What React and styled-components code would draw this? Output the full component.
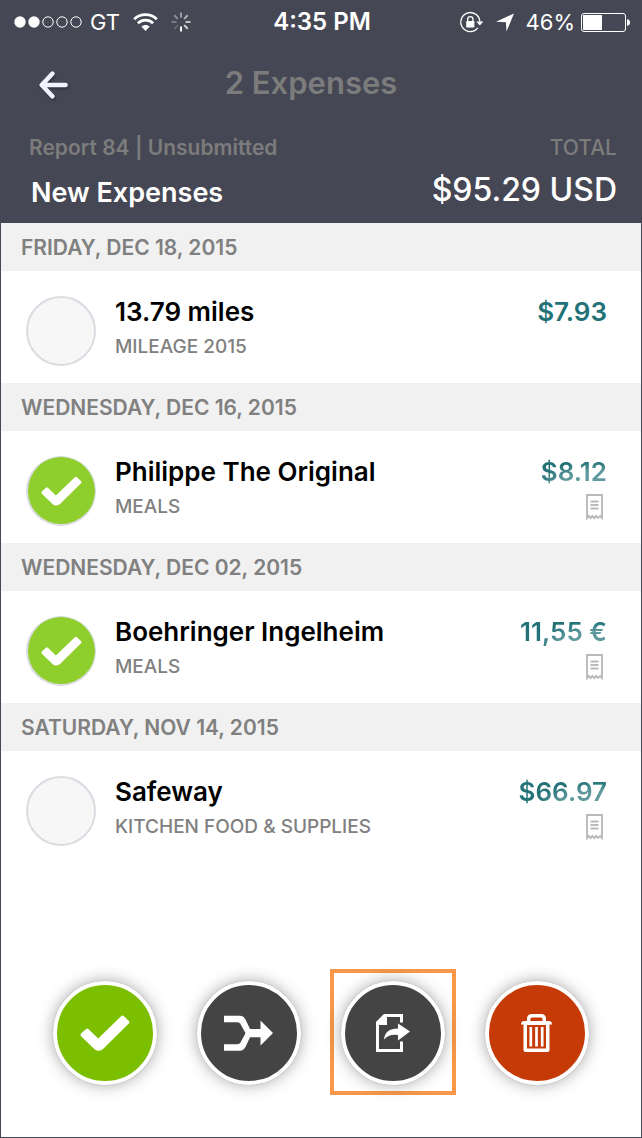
import React, { useState } from 'react';
import styled, { createGlobalStyle, css } from 'styled-components';

const GlobalStyle = createGlobalStyle`
  *, *::before, *::after { box-sizing: border-box; }
  body {
    margin: 0;
    background: #ffffff;
    font-family: Inter, "Liberation Sans", sans-serif;
  }
  h1, h2, p { margin: 0; }
`;

const Screen = styled.div`
  display: flex;
  flex-direction: column;
  min-height: 100vh;
  border: 1px solid #464754;
  border-top: 0;
`;

const Header = styled.header`
  background: #464754;
  color: #ffffff;
`;

const StatusBar = styled.div`
  display: grid;
  grid-template-columns: 1fr auto 1fr;
  align-items: center;
  height: 44px;
  padding: 0 11px 0 13px;
  font-size: 22px;
  line-height: 28px;
`;

const StatusGroup = styled.div`
  display: flex;
  align-items: center;
  justify-content: ${(p) => (p.$end ? 'flex-end' : 'flex-start')};
  gap: ${(p) => p.$gap}px;
`;

const Clock = styled.time`
  font-size: 24px;
  font-weight: 600;
`;

const Icon = styled.svg`
  display: block;
  flex: none;
  overflow: visible;
`;

const NavBar = styled.div`
  display: grid;
  grid-template-columns: 60px 1fr 80px;
  align-items: center;
  height: 78px;
  padding: 0 22px;
`;

const BackButton = styled.button`
  display: flex;
  justify-content: center;
  padding: 16px 0 12px;
  border: 0;
  background: none;
  cursor: pointer;
  svg { filter: drop-shadow(1px 2px 1px rgba(0, 0, 0, 0.3)); }
`;

const Title = styled.h1`
  color: #7c7c7c;
  font-size: 31px;
  line-height: 40px;
  font-weight: 600;
  text-align: center;
`;

const Summary = styled.div`
  display: flex;
  justify-content: space-between;
  padding: 13px 24px 10px 28px;
`;

const SummaryColumn = styled.div`
  display: flex;
  flex-direction: column;
  gap: 12px;
  align-items: ${(p) => (p.$end ? 'flex-end' : 'flex-start')};
`;

const Caption = styled.p`
  color: #7c7c7c;
  font-size: 21px;
  line-height: 26px;
  font-weight: ${(p) => (p.$light ? 500 : 600)};
`;

const ReportName = styled.p`
  padding-left: 2px;
  font-size: 27px;
  line-height: 40px;
  font-weight: 600;
`;

const ReportTotal = styled.p`
  font-size: 32px;
  line-height: 34px;
  font-weight: 500;
`;

const DateHeading = styled.h2`
  padding: 2px 20px 0;
  background: #f1f1f1;
  color: #808080;
  font-size: 21px;
  line-height: 46px;
  font-weight: 600;
  text-transform: uppercase;
`;

const Expense = styled.label`
  display: flex;
  min-height: 112px;
  padding: 25px 34px 16px 25px;
  cursor: pointer;
`;

const CheckWrap = styled.span`
  display: grid;
  flex: none;
  width: 70px;
  height: 70px;
  margin-right: 19px;
  > * { grid-area: 1 / 1; place-self: center; }
  svg { pointer-events: none; }
`;

const CheckCircle = styled.input`
  appearance: none;
  width: 70px;
  height: 70px;
  margin: 0;
  border: 2px solid #dadce2;
  border-radius: 50%;
  background: #f7f7f7;
  cursor: pointer;
  &:checked {
    background: #8fcf2d;
    border-width: 1px 1px 2px 2px;
  }
`;

const Details = styled.span`
  display: flex;
  flex: ${(p) => (p.$end ? 'none' : '1')};
  flex-direction: column;
  align-items: ${(p) => (p.$end ? 'flex-end' : 'flex-start')};
  gap: ${(p) => (p.$end ? 6 : 7)}px;
`;

const Merchant = styled.span`
  color: #000000;
  font-size: 26px;
  line-height: 32px;
  font-weight: 600;
`;

const Category = styled.span`
  color: #808080;
  font-size: 19px;
  line-height: 24px;
  font-weight: 500;
  text-transform: uppercase;
`;

const Amount = styled.span`
  color: #227277;
  font-size: 26px;
  line-height: 32px;
  font-weight: 600;
  ${(p) => p.$faded && css`
    background: radial-gradient(ellipse 64px 26px at calc(100% - 10px) 31px, #5f999d 60%, #227277 100%);
    background-clip: text;
    color: transparent;
  `}
`;

const ReceiptSlot = styled.span`
  padding: 0 4px;
`;

const Actions = styled.div`
  display: flex;
  justify-content: space-between;
  margin-top: auto;
  padding: 0 41px 42px;
`;

const ActionFrame = styled.div`
  padding: 8px 7px 6px;
  border: 4px solid ${(p) => (p.$highlighted ? '#f89848' : 'transparent')};
`;

const ActionButton = styled.button`
  display: flex;
  align-items: center;
  justify-content: center;
  width: 104px;
  height: 104px;
  padding: 0;
  border: 4px solid #ffffff;
  border-radius: 50%;
  background: ${(p) => p.$color};
  box-shadow: 0 0 1px rgba(0, 0, 0, 0.3), 0 0 16px rgba(0, 0, 0, 0.35);
  cursor: pointer;
`;

const Signal = () => (
  <Icon width="68" height="12" viewBox="0 0 68 12" aria-label="Signal strength">
    {[6, 20, 34, 48, 62].map((x, i) => (
      <circle key={x} cx={x} cy="6" r={i < 2 ? 5.7 : 5.2} fill={i < 2 ? '#fff' : 'none'} stroke={i < 2 ? 'none' : '#fff'} />
    ))}
  </Icon>
);

const Wifi = () => (
  <Icon width="25" height="19" viewBox="0 0 25 19" aria-label="Wi-Fi">
    <path d="M1.200 6.200C7.400 .2 17.600 .2 23.800 6.200M4.900 10.200C9.200 6.200 15.800 6.200 20.100 10.200" fill="none" stroke="#fff" strokeWidth="2.800" />
    <path d="M8.300 13.600C10.700 11.400 14.300 11.400 16.700 13.600L12.500 18Z" fill="#fff" />
  </Icon>
);

const Spinner = () => (
  <Icon width="20" height="20" viewBox="-10 -10 20 20" aria-label="Loading">
    {[0.5, 0.58, 0.7, 0.8, 1, 0.18, 0.3, 0.4].map((o, i) => (
      <path key={i} d="M0-9.500V-4.500" transform={`rotate(${i * 45})`} stroke="#fff" strokeOpacity={o} strokeWidth="1.900" />
    ))}
  </Icon>
);

const RotationLock = () => (
  <Icon width="24" height="21" viewBox="0 0 24 21" aria-label="Rotation lock">
    <path d="M17.800 15.900A9.500 9.500 0 1 1 19.800 9.500" fill="none" stroke="#fff" strokeWidth="1.300" />
    <path d="M16.300 9.500H23.300L19.800 13.500Z" fill="#fff" />
    <rect x="6.200" y="9" width="8.200" height="6.400" rx=".6" fill="#fff" />
    <path d="M7.700 9.500V7.200A2.600 2.600 0 0 1 12.900 7.200V9.500" fill="none" stroke="#fff" strokeWidth="1.300" />
  </Icon>
);

const LocationArrow = () => (
  <Icon width="18" height="19" viewBox="0 0 18 19" aria-label="Location in use">
    <path d="M18 .5L10.500 18.500L9.900 9.300L0 8.800Z" fill="#fff" />
  </Icon>
);

const Battery = () => (
  <Icon width="49" height="19" viewBox="0 0 49 19" aria-label="Battery">
    <rect x=".5" y=".5" width="44" height="18" rx="2.500" fill="none" stroke="#fff" />
    <path d="M2 2H21V17H2ZM46 6.300Q49 6.500 49 9.500T46 12.700Z" fill="#fff" />
  </Icon>
);

const BackArrow = () => (
  <Icon width="28" height="28" viewBox="0 0 28 28">
    <path d="M26.500 14H4M13.300 2.700L2.800 14L13.300 25.300" fill="none" stroke="#f0f3ff" strokeWidth="4.600" strokeLinejoin="round" strokeLinecap="round" />
  </Icon>
);

const Check = ({ width, height }) => (
  <Icon width={width} height={height} viewBox="0 0 50 36">
    <path d="M1.300 18.300L6.500 13.800Q7.500 13.200 8.400 14.100L18.200 23.500L41.300 1.100Q42.600-.1 43.900 1.200L49 6Q50 7.200 48.800 8.400L23.500 33.600Q21.500 36 18 35.800Q15.800 35.700 14 33.800L1.100 21.300Q0 19.800 1.300 18.300Z" fill="#fff" />
  </Icon>
);

const Merge = () => (
  <Icon width="50" height="36" viewBox="0 0 50 36">
    <path d="M0 .7H16Q19.500 .7 21.500 4.500L26 14H36.500V5.500L49 18L36.500 30.500V22.300H26L21.500 32Q19.500 35.700 16 35.700H0V29.200H13.500Q15.500 29.200 16.500 27.500L21.500 18.200L16.500 9Q15.500 7.200 13.500 7.200H0Z" fill="#fff" />
  </Icon>
);

const Share = () => (
  <Icon width="34" height="38" viewBox="0 0 34 38">
    <path d="M25.500 8.500V1.500H9L1.500 9V36.500H25.500V27.500" fill="none" stroke="#fff" strokeWidth="3" />
    <path d="M0 11V8L8 0H11V11Z" fill="#fff" />
    <path d="M22 9.500L34 17.500L22 26.500V21Q13 19.500 8 25.500Q9 14.500 22 14.500Z" fill="#fff" />
  </Icon>
);

const Trash = () => (
  <Icon width="32" height="38" viewBox="0 0 32 38">
    <path d="M0 10.500Q0 7 3 7H28Q31 7 31 10.500H28.500V36Q28.500 38 26.500 38H4.500Q2.500 38 2.500 36V10.500ZM6 11V34.500H25V11Z" fill="#fff" fillRule="evenodd" />
    <path d="M7.700 8V5Q7.700 1.700 11 1.700H20Q23.300 1.700 23.300 5V8" fill="none" stroke="#fff" strokeWidth="3.400" />
    <path d="M9.800 13V32.500M15.500 13V32.500M21.200 13V32.500" fill="none" stroke="#fff" strokeWidth="2.700" />
  </Icon>
);

const Receipt = () => (
  <Icon width="17" height="25" viewBox="0 0 17 25" aria-label="Receipt attached">
    <path d="M1 24V1H16V24L14.200 22L12 24L10.200 22L8.300 24L6.500 22L4.600 24L2.800 22Z" fill="#fff" stroke="#bababa" strokeWidth="1.900" />
    <path d="M4.500 7.500H12.500M4.500 11H12.500M4.500 14.500H12.500" fill="none" stroke="#bababa" strokeWidth="1.800" />
  </Icon>
);

const expenses = [
  { date: 'Friday, Dec 18, 2015', merchant: '13.79 miles', category: 'Mileage 2015', amount: '$7.93', receipt: false, checked: false },
  { date: 'Wednesday, Dec 16, 2015', merchant: 'Philippe The Original', category: 'Meals', amount: '$8.12', receipt: true, checked: true },
  { date: 'Wednesday, Dec 02, 2015', merchant: 'Boehringer Ingelheim', category: 'Meals', amount: '11,55 €', receipt: true, checked: true },
  { date: 'Saturday, Nov 14, 2015', merchant: 'Safeway', category: 'Kitchen Food & Supplies', amount: '$66.97', receipt: true, checked: false },
];

const actions = [
  { label: 'Approve', color: '#7bbf00', icon: <Check width={50} height={36} /> },
  { label: 'Merge', color: '#444444', icon: <Merge /> },
  { label: 'Move to report', color: '#444444', icon: <Share />, highlighted: true },
  { label: 'Delete', color: '#c53a06', icon: <Trash /> },
];

function ExpenseRow({ expense }) {
  const [checked, setChecked] = useState(expense.checked);
  return (
    <Expense>
      <CheckWrap>
        <CheckCircle type="checkbox" checked={checked} onChange={(e) => setChecked(e.target.checked)} />
        {checked && <Check width={41} height={30} />}
      </CheckWrap>
      <Details>
        <Merchant>{expense.merchant}</Merchant>
        <Category>{expense.category}</Category>
      </Details>
      <Details $end>
        <Amount $faded={expense.receipt}>{expense.amount}</Amount>
        {expense.receipt && <ReceiptSlot><Receipt /></ReceiptSlot>}
      </Details>
    </Expense>
  );
}

export default function App() {
  return (
    <>
      <GlobalStyle />
      <Screen>
        <Header>
          <StatusBar>
            <StatusGroup $gap={13}>
              <StatusGroup $gap={8}>
                <Signal />
                <span>GT</span>
              </StatusGroup>
              <Wifi />
              <Spinner />
            </StatusGroup>
            <Clock>4:35 PM</Clock>
            <StatusGroup $end $gap={12}>
              <RotationLock />
              <LocationArrow />
              <StatusGroup $gap={6}>
                <span>46%</span>
                <Battery />
              </StatusGroup>
            </StatusGroup>
          </StatusBar>
          <NavBar>
            <BackButton type="button" aria-label="Back"><BackArrow /></BackButton>
            <Title>2 Expenses</Title>
          </NavBar>
          <Summary>
            <SummaryColumn>
              <Caption>Report 84 | Unsubmitted</Caption>
              <ReportName>New Expenses</ReportName>
            </SummaryColumn>
            <SummaryColumn $end>
              <Caption $light>TOTAL</Caption>
              <ReportTotal>$95.29 USD</ReportTotal>
            </SummaryColumn>
          </Summary>
        </Header>
        <main>
          {expenses.map((e) => (
            <section key={e.date}>
              <DateHeading>{e.date}</DateHeading>
              <ExpenseRow expense={e} />
            </section>
          ))}
        </main>
        <Actions>
          {actions.map((a) => (
            <ActionFrame key={a.label} $highlighted={a.highlighted}>
              <ActionButton type="button" aria-label={a.label} $color={a.color}>{a.icon}</ActionButton>
            </ActionFrame>
          ))}
        </Actions>
      </Screen>
    </>
  );
}
